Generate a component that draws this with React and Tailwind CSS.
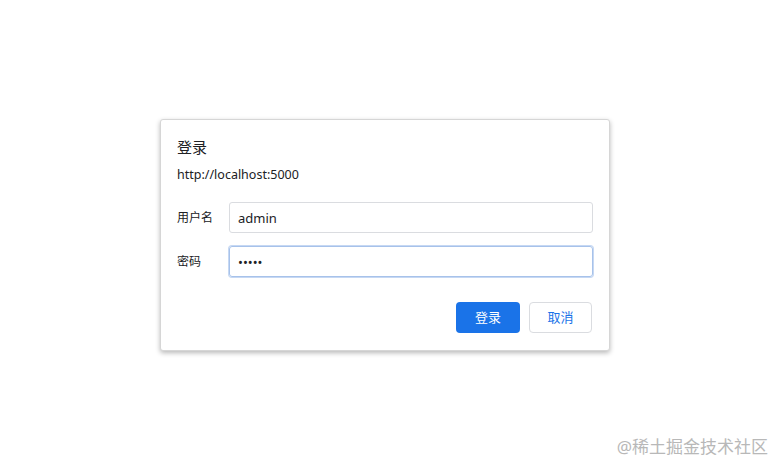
import React from "react";

const font = { fontFamily: '"Noto Sans", "Noto Sans CJK SC", sans-serif' };

export default function App() {
  return (
    <div className="relative w-[783px] h-[470px] bg-white" style={font}>
      <div className="flex pt-[119px] pl-[160px]">
        <div className="w-[450px] h-[232px] bg-white border border-[#d6d6d6] rounded-[3px] shadow-[0_2px_5px_rgba(0,0,0,0.28)] px-[16px] pt-[16px]">
          <div className="text-[15px] leading-[22px] text-[#202124]">登录</div>
          <div className="mt-[8px] text-[12.5px] leading-[18px] text-[#202124]">http://localhost:5000</div>
          <div className="mt-[18px] flex items-center">
            <label className="w-[52px] text-[12px] text-[#202124]">用户名</label>
            <input
              defaultValue="admin"
              className="w-[364px] h-[31px] border border-[#dadce0] rounded-[3px] px-[8px] text-[13px] text-[#202124] outline-none"
            />
          </div>
          <div className="mt-[13px] flex items-center">
            <label className="w-[52px] text-[12px] text-[#202124]">密码</label>
            <input
              type="password"
              defaultValue="admin"
              className="w-[364px] h-[31px] border border-[#a7c2ea] rounded-[3px] px-[8px] text-[13px] text-[#202124] outline-none shadow-[0_0_0_1px_#c6d8f3]"
            />
          </div>
          <div className="mt-[25px] flex justify-end gap-[9px] pr-[1px]">
            <button className="w-[64px] h-[31px] rounded-[4px] bg-[#1a73e8] text-white text-[13px]">登录</button>
            <button className="w-[63px] h-[31px] rounded-[4px] border border-[#dadce0] bg-white text-[#1a73e8] text-[13px]">取消</button>
          </div>
        </div>
      </div>
      <div className="absolute right-[15px] top-[434px] text-[17px] text-[#b8b8b8]">@稀土掘金技术社区</div>
    </div>
  );
}
